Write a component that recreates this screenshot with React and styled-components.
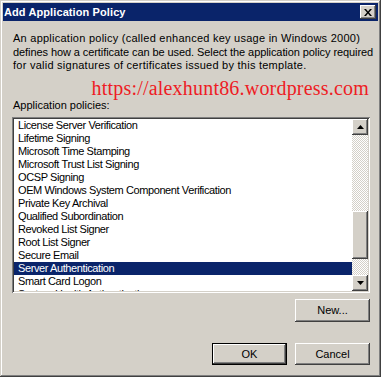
import React from "react"
import styled, { createGlobalStyle } from "styled-components"

const GlobalStyle = createGlobalStyle`
body {
  margin: 0;
  overflow: hidden;
  background: #d4d0c8;
}
`

const raised = `
box-shadow: inset -1px -1px #404040, inset 1px 1px #ffffff, inset -2px -2px #808080, inset 2px 2px #d4d0c8;
`

const Window = styled.div`
width: 381px;
height: 377px;
box-sizing: border-box;
padding: 3px;
background: #d4d0c8;
box-shadow: inset -1px -1px #404040, inset 1px 1px #d4d0c8, inset -2px -2px #808080, inset 2px 2px #ffffff;
font-family: "Liberation Sans", Arial, sans-serif;
font-size: 11px;
color: #000;
display: flex;
flex-direction: column;
`

const TitleBar = styled.div`
height: 18px;
background: #0a246a;
display: flex;
align-items: center;
justify-content: space-between;
padding: 0 2px 0 1px;
`

const Title = styled.span`
color: #fff;
font-weight: bold;
font-size: 11px;
letter-spacing: 0.1px;
`

const CloseButton = styled.div`
width: 16px;
height: 14px;
background: #d4d0c8;
${raised}
display: flex;
align-items: center;
justify-content: center;
`

const Content = styled.div`
padding: 11px 8px 0 9px;
display: flex;
flex-direction: column;
`

const Description = styled.div`
padding-left: 1px;
`

const Line = styled.div`
line-height: 13.5px;
letter-spacing: ${p => p.$spacing}px;
white-space: nowrap;
`

const Watermark = styled.div`
margin-top: 5px;
height: 21px;
line-height: 21px;
font-family: "Liberation Serif", "Times New Roman", serif;
font-size: 20px;
letter-spacing: 0.2px;
color: #ee1c24;
text-align: right;
padding-right: 1px;
`

const Label = styled.div`
padding-left: 1px;
line-height: 13px;
margin-bottom: 5px;
`

const ListBox = styled.div`
width: 358px;
height: 176px;
box-sizing: border-box;
padding: 2px;
background: #fff;
box-shadow: inset 1px 1px #808080, inset -1px -1px #ffffff, inset 2px 2px #404040, inset -2px -2px #d4d0c8;
display: flex;
`

const Items = styled.div`
flex: 1;
overflow: hidden;
`

const Item = styled.div`
height: 13px;
line-height: 13px;
padding-left: 4px;
letter-spacing: -0.4px;
white-space: nowrap;
background: ${p => (p.$selected ? "#0a246a" : "transparent")};
color: ${p => (p.$selected ? "#fff" : "#000")};
`

const ScrollBar = styled.div`
width: 16px;
display: flex;
flex-direction: column;
`

const ScrollButton = styled.div`
width: 16px;
height: 16px;
background: #d4d0c8;
${raised}
display: flex;
align-items: center;
justify-content: center;
`

const Track = styled.div`
flex: 1;
background-color: #ffffff;
background-image: repeating-conic-gradient(#d4d0c8 0 25%, #ffffff 0 50%);
background-size: 2px 2px;
`

const Thumb = styled.div`
height: 48px;
margin-top: 76px;
background: #d4d0c8;
${raised}
`

const ButtonRow = styled.div`
display: flex;
justify-content: flex-end;
gap: 8px;
margin-top: ${p => p.$top}px;
`

const Button = styled.div`
width: 75px;
height: ${p => p.$h || 23}px;
box-sizing: border-box;
background: #d4d0c8;
display: flex;
align-items: center;
justify-content: center;
${raised}
${p => p.$default && `
  box-shadow: inset 0 0 0 1px #000, inset -2px -2px #404040, inset 2px 2px #ffffff, inset -3px -3px #808080;
`}
`

const Arrow = ({ down }) => (
  <svg width="7" height="4" viewBox="0 0 7 4">
    <path d={down ? "M0 0h7L3.5 4z" : "M3.5 0L7 4H0z"} fill="#000" />
  </svg>
)

const policies = [
  "License Server Verification",
  "Lifetime Signing",
  "Microsoft Time Stamping",
  "Microsoft Trust List Signing",
  "OCSP Signing",
  "OEM Windows System Component Verification",
  "Private Key Archival",
  "Qualified Subordination",
  "Revoked List Signer",
  "Root List Signer",
  "Secure Email",
  "Server Authentication",
  "Smart Card Logon",
  "System Health Authentication",
]

export default function App() {
  return (
    <Window>
      <GlobalStyle />
      <TitleBar>
        <Title>Add Application Policy</Title>
        <CloseButton>
          <svg width="8" height="7" viewBox="0 0 8 7">
            <path d="M0 0h2l2 2.5L6 0h2L5 3.5 8 7H6L4 4.5 2 7H0l3-3.5z" fill="#000" />
          </svg>
        </CloseButton>
      </TitleBar>
      <Content>
        <Description>
          <Line $spacing={0.25}>An application policy (called enhanced key usage in Windows 2000)</Line>
          <Line $spacing={-0.08}>defines how a certificate can be used. Select the application policy required</Line>
          <Line $spacing={0.25}>for valid signatures of certificates issued by this template.</Line>
        </Description>
        <Watermark>https://alexhunt86.wordpress.com</Watermark>
        <Label>Application policies:</Label>
        <ListBox>
          <Items>
            {policies.map(name => (
              <Item key={name} $selected={name === "Server Authentication"}>{name}</Item>
            ))}
          </Items>
          <ScrollBar>
            <ScrollButton><Arrow /></ScrollButton>
            <Track><Thumb /></Track>
            <ScrollButton><Arrow down /></ScrollButton>
          </ScrollBar>
        </ListBox>
        <ButtonRow $top={6}>
          <Button>New...</Button>
        </ButtonRow>
        <ButtonRow $top={21}>
          <Button $default $h={22}>OK</Button>
          <Button $h={22}>Cancel</Button>
        </ButtonRow>
      </Content>
    </Window>
  )
}
